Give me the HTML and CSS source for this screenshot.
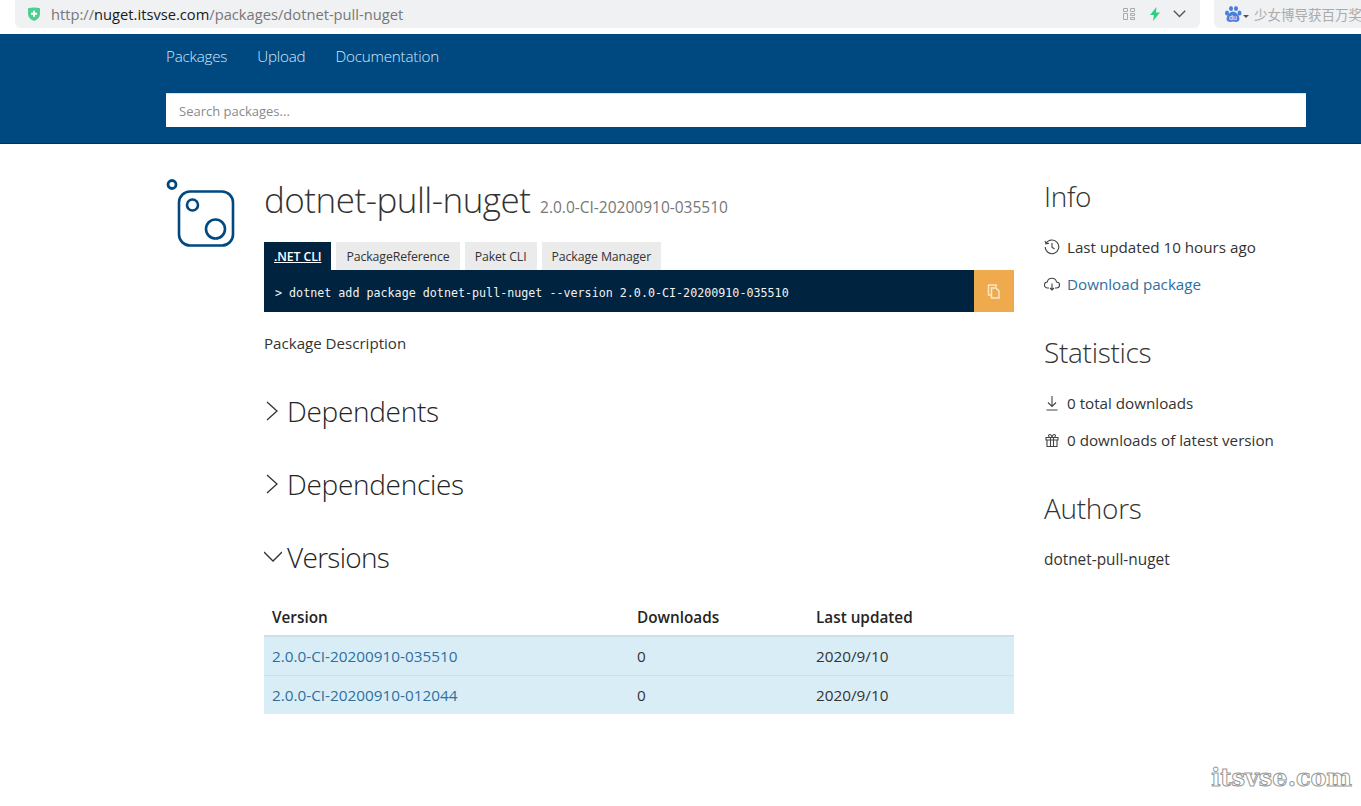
FILE: index.html
```html
<!DOCTYPE html>
<html lang="en">
<head>
<meta charset="UTF-8">
<title>NuGet - dotnet-pull-nuget</title>
<link rel="stylesheet" href="styles.css">
</head>
<body>
  <div class="browser-bar">
    <div class="url-box">
      <svg class="shield" width="16" height="16" viewBox="0 0 16 16"><path d="M2 2.200 Q8 .6 14 2.200 V8 Q14 12.500 8 15 Q2 12.500 2 8Z" fill="#4fcf8f"/><path d="M8 4.800v6M5 7.800h6" stroke="#fff" stroke-width="2"/></svg>
      <span class="url"><span class="url-dim">http://</span>nuget.itsvse.com<span class="url-dim">/packages/dotnet-pull-nuget</span></span>
      <span class="url-tools">
        <svg width="12" height="12" viewBox="0 0 12 12" fill="none" stroke="#aaa"><path d="M.5.5h4v3h-4zM7.5.5h4v3h-4zM.5 5.500h4v6h-4zM7.5 5.500h4v2h-4zM7.5 9.500h4v2h-4z"/></svg>
        <svg width="12" height="14" viewBox="0 0 12 14"><path d="M7.500 0 1 8h4l-1 6 7-8.500H7z" fill="#2ecf82"/></svg>
        <svg class="url-chevron" width="13" height="8" viewBox="0 0 13 8" fill="none" stroke="#555" stroke-width="1.400"><path d="M.8.800 6.500 6.500 12.200.8"/></svg>
      </span>
    </div>
    <div class="search-box">
      <svg class="baidu" width="18" height="18" viewBox="0 0 18 18" fill="#4a7fdc"><ellipse cx="3" cy="8" rx="2" ry="2.500"/><ellipse cx="7" cy="3.500" rx="2" ry="2.600"/><ellipse cx="12" cy="3.500" rx="2" ry="2.600"/><ellipse cx="15.500" cy="8" rx="2" ry="2.500"/><path d="M9 6.500c3 0 6.500 4 6.500 7.500 0 3-3.500 3.500-6.500 2.500C6 17.500 2.500 17 2.500 14c0-3.500 3.500-7.500 6.500-7.500z"/><text x="9" y="15" text-anchor="middle" font-size="7" font-family="Liberation Sans" fill="#fff">du</text></svg>
      <span class="caret-down"></span>
      <span class="hot-search">少女博导获百万奖金</span>
    </div>
  </div>

  <header class="site-header">
    <nav class="site-nav">
      <a href="#">Packages</a>
      <a href="#">Upload</a>
      <a href="#">Documentation</a>
    </nav>
    <input class="search-input" type="text" placeholder="Search packages...">
  </header>

  <main class="page">
    <div class="pkg-icon">
      <svg width="70" height="70" viewBox="0 0 70 70" fill="none" stroke="#004880"><circle cx="6" cy="5.500" r="4" stroke-width="2.800"/><rect x="13" y="12.500" width="54" height="54" rx="11" stroke-width="2.600"/><circle cx="26.500" cy="26" r="5.500" stroke-width="2.600"/><circle cx="49.500" cy="50" r="9.500" stroke-width="2.600"/></svg>
    </div>

    <section class="pkg-main">
      <h1 class="pkg-title">dotnet-pull-nuget <small>2.0.0-CI-20200910-035510</small></h1>

      <div class="tabs">
        <a class="tab active" href="#">.NET CLI</a>
        <a class="tab" href="#">PackageReference</a>
        <a class="tab" href="#">Paket CLI</a>
        <a class="tab" href="#">Package Manager</a>
      </div>
      <div class="command">
        <code>&gt; dotnet add package dotnet-pull-nuget --version 2.0.0-CI-20200910-035510</code>
        <button class="copy-btn" aria-label="Copy">
          <svg width="14" height="15" viewBox="0 0 14 15" fill="none" stroke="#fbe6c4" stroke-width="1.500"><path d="M9 3V1H1.500v10H4"/><path d="M4.500 4h4.500l3 3v7H4.500z"/></svg>
        </button>
      </div>

      <p class="description">Package Description</p>

      <h2 class="section-title">
        <svg class="chev" width="16" height="22" viewBox="0 0 16 22" fill="none" stroke="#333" stroke-width="1.300"><path d="M3 2l10 9-10 9"/></svg>
        Dependents
      </h2>
      <h2 class="section-title">
        <svg class="chev" width="16" height="22" viewBox="0 0 16 22" fill="none" stroke="#333" stroke-width="1.300"><path d="M3 2l10 9-10 9"/></svg>
        Dependencies
      </h2>
      <h2 class="section-title">
        <svg class="chev-open" width="18" height="22" viewBox="0 0 18 22" fill="none" stroke="#333" stroke-width="1.300"><path d="M0 6l9 9 9-9"/></svg>
        <span class="versions-label">Versions</span>
      </h2>

      <table class="versions">
        <thead>
          <tr><th class="col-version">Version</th><th class="col-downloads">Downloads</th><th>Last updated</th></tr>
        </thead>
        <tbody>
          <tr><td><a href="#">2.0.0-CI-20200910-035510</a></td><td>0</td><td>2020/9/10</td></tr>
          <tr><td><a href="#">2.0.0-CI-20200910-012044</a></td><td>0</td><td>2020/9/10</td></tr>
        </tbody>
      </table>
    </section>

    <aside class="sidebar">
      <h2>Info</h2>
      <ul>
        <li>
          <svg width="16" height="16" viewBox="0 0 16 16" fill="none" stroke="#444" stroke-width="1.100"><path d="M2.200 4.300A6.800 6.800 0 1 1 1.200 8M1 1.800l1 3 3-.6M8 4v4.300l2.500 1.700"/></svg>
          Last updated 10 hours ago
        </li>
        <li>
          <svg width="16" height="16" viewBox="0 0 16 16" fill="none" stroke="#444" stroke-width="1.100"><path d="M5 12H3.500a3 3 0 0 1-.2-6A4.700 4.700 0 0 1 12.500 6a3 3 0 0 1 0 6H11M8 7.500V14M6 12l2 2 2-2"/></svg>
          <a href="#">Download package</a>
        </li>
      </ul>
      <h2>Statistics</h2>
      <ul>
        <li>
          <svg width="16" height="16" viewBox="0 0 16 16" fill="none" stroke="#444" stroke-width="1.100"><path d="M8 1v10M4 7.500l4 4 4-4M2.500 15h11"/></svg>
          0 total downloads
        </li>
        <li>
          <svg width="16" height="16" viewBox="0 0 16 16" fill="none" stroke="#444" stroke-width="1.100"><path d="M2 5.500h12v2.500H2zM3 8v6.500h10V8M6.500 5.500v9M9.500 5.500v9M6.500 5.500C4 5.500 4 2 6 2.500 7 2.800 8 4 8 5.500 8 4 9 2.800 10 2.500c2-.5 2 3-.5 3"/></svg>
          0 downloads of latest version
        </li>
      </ul>
      <h2>Authors</h2>
      <p class="author">dotnet-pull-nuget</p>
    </aside>
  </main>

  <div class="watermark">itsvse.com</div>
</body>
</html>
```

FILE: styles.css
```css
* {
  margin: 0;
  padding: 0;
  box-sizing: border-box;
}

body {
  font-family: 'Open Sans', 'Noto Sans', sans-serif;
  font-size: 15px;
  color: #333;
  background-color: #fff;
  overflow: hidden;
  height: 806px;
  position: relative;
}

a {
  text-decoration: none;
  color: #2f6f9f;
}

/* browser chrome */
.browser-bar {
  height: 34px;
  display: flex;
  overflow: hidden;
  background-color: #fff;
}

.url-box {
  width: 1185px;
  height: 28px;
  margin-left: 15px;
  padding: 0 14px 0 11px;
  display: flex;
  align-items: center;
  background-color: #f0f1f3;
  border-radius: 0 0 6px 6px;
}

.shield {
  margin-right: 9px;
}

.url {
  font-size: 14.700px;
  color: #1a1a1a;
  flex: 1;
}

.url-dim {
  color: #777;
}

.url-tools {
  display: flex;
  align-items: center;
  gap: 14px;
}

.url-chevron {
  margin-left: -2px;
}

.search-box {
  margin-left: 14px;
  flex: 1;
  height: 28px;
  padding-left: 10px;
  display: flex;
  align-items: center;
  background-color: #f0f1f3;
  border-radius: 0 0 0 6px;
  white-space: nowrap;
  overflow: hidden;
}

.baidu {
  flex-shrink: 0;
}

.caret-down {
  flex-shrink: 0;
  width: 0;
  height: 0;
  margin: 7px 5px 0 1px;
  border: 3px solid transparent;
  border-top-color: #555;
}

.hot-search {
  font-family: 'Noto Sans CJK SC', sans-serif;
  font-size: 13.500px;
  color: #aaa;
}

/* site header */
.site-header {
  height: 110px;
  padding: 0 55px 0 166px;
  background-color: #004880;
  border-bottom: 1px solid #00325a;
}

.site-nav {
  height: 44px;
  margin-bottom: 15px;
  display: flex;
  align-items: center;
  gap: 30px;
}

.site-nav a {
  color: #cfeafb;
  font-size: 15.200px;
  font-weight: 300;
  letter-spacing: -0.2px;
}

.search-input {
  display: block;
  width: 100%;
  height: 34px;
  padding: 0 13px;
  border: 1px solid #cfe4f4;
  border-width: 1px 0 0 0;
  font-family: inherit;
  font-size: 13px;
  background-color: #fff;
}

.search-input::placeholder {
  color: #8a8a8a;
}

/* package page */
.page {
  display: flex;
  padding: 35px 0 0 166px;
}

.pkg-icon {
  width: 98px;
  flex-shrink: 0;
}

.pkg-main {
  width: 750px;
  flex-shrink: 0;
}

.pkg-title {
  font-size: 35px;
  font-weight: 300;
  line-height: 42px;
  color: #333;
  letter-spacing: -0.5px;
  white-space: nowrap;
}

.pkg-title small {
  font-size: 15.500px;
  font-weight: 400;
  line-height: 1;
  letter-spacing: 0;
  color: #777;
  margin-left: 1px;
}

.tabs {
  display: flex;
  gap: 5px;
  margin-top: 21px;
}

.tab {
  height: 28px;
  padding: 0 10px;
  display: flex;
  align-items: center;
  font-size: 12.300px;
  letter-spacing: -0.1px;
  color: #333;
  background-color: #ebebeb;
}

.tab.active {
  color: #fff;
  font-weight: 600;
  text-decoration: underline;
  background-color: #002440;
}

.command {
  height: 42px;
  display: flex;
  align-items: center;
  justify-content: space-between;
  background-color: #002440;
}

.command code {
  padding: 3px 0 0 11px;
  font-family: 'DejaVu Sans Mono', 'Liberation Mono', monospace;
  font-size: 11.700px;
  color: #f2f2f2;
}

.copy-btn {
  width: 40px;
  height: 42px;
  display: flex;
  align-items: center;
  justify-content: center;
  border: none;
  background-color: #eeaa4c;
}

.description {
  margin-top: 20px;
  line-height: 22px;
  font-size: 15.100px;
}

.section-title {
  display: flex;
  align-items: center;
  gap: 7px;
  height: 40px;
  margin-top: 33px;
  font-size: 28px;
  font-weight: 300;
  letter-spacing: -0.3px;
  color: #242424;
}

.section-title:first-of-type {
  margin-top: 37px;
}

.chev-open {
  margin-right: -2px;
}

.versions-label {
  letter-spacing: -0.7px;
}

.versions {
  width: 100%;
  margin-top: 21px;
  border-collapse: collapse;
  font-size: 15.300px;
}

.versions th {
  height: 38px;
  padding: 0 8px;
  text-align: left;
  font-weight: 600;
  color: #242424;
  border-bottom: 2px solid #cfdfe8;
}

.col-version {
  width: 365px;
}

.col-downloads {
  width: 179px;
}

.versions td {
  height: 39px;
  padding: 0 8px;
  color: #333;
  background-color: #d9edf7;
  border-top: 1px solid #c9e2ee;
}

.versions tbody tr:first-child td {
  border-top: none;
}

/* sidebar */
.sidebar {
  margin: -1px 0 0 30px;
  width: 262px;
}

.sidebar h2 {
  font-size: 28px;
  font-weight: 300;
  line-height: 36px;
  color: #333;
  letter-spacing: -0.3px;
}

.sidebar ul {
  list-style: none;
  margin: 14px 0 32px;
}

.sidebar li {
  display: flex;
  align-items: center;
  gap: 7px;
  height: 37px;
  font-size: 15.200px;
  white-space: nowrap;
}

.author {
  margin-top: 23px;
  font-size: 15.400px;
  line-height: 22px;
}

.watermark {
  position: absolute;
  right: 9px;
  bottom: 14px;
  font-family: 'DejaVu Serif', serif;
  font-weight: 700;
  font-size: 24px;
  color: #fff;
  -webkit-text-stroke: 1px #9a9a9a;
}
```
